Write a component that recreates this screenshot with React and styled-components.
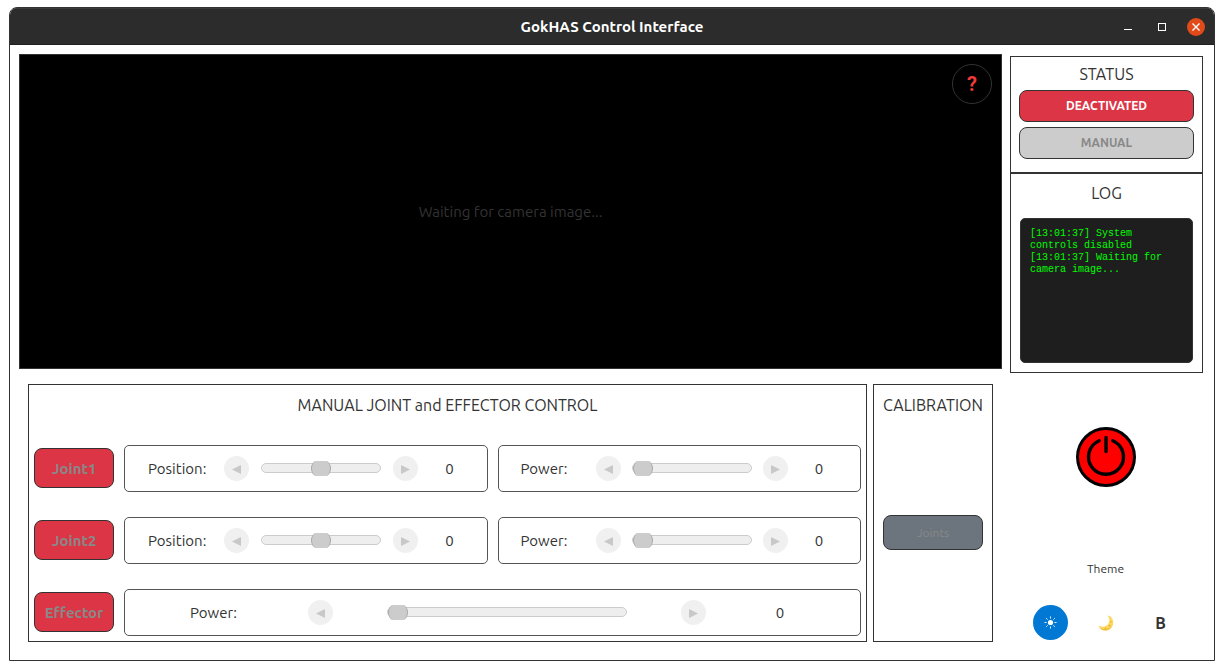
import React, { useState } from "react";
import styled, { createGlobalStyle, css } from "styled-components";

const ink = "#333333";
const danger = "#dc3545";

const GlobalStyle = createGlobalStyle`
  *, *::before, *::after { box-sizing: border-box; }
  body {
    margin: 0;
    background: #ffffff;
    color: ${ink};
    font-family: "Ubuntu", "Noto Sans", "Liberation Sans", sans-serif;
    font-size: 15px;
  }
  button, input { font-family: inherit; margin: 0; padding: 0; }
  h1, h2, p { margin: 0; }
  svg { display: block; }
`;

const Page = styled.div`
  min-height: 100vh;
  padding: 7px 9px 9px;
  display: flex;
`;

const Window = styled.div`
  flex: 1;
  min-width: 0;
  display: flex;
  flex-direction: column;
  border: 1px solid ${ink};
  border-radius: 8px 8px 0 0;
  overflow: hidden;
`;

const TitleBar = styled.header`
  display: grid;
  grid-template-columns: 1fr auto 1fr;
  align-items: center;
  height: 37px;
  padding: 0 9px;
  background: #2c2c2c;
  border-top: 1px solid #3a3a3a;
  border-bottom: 1px solid #1f1f1f;
`;

const WindowTitle = styled.h1`
  grid-column: 2;
  color: #ffffff;
  font-size: 15px;
  line-height: 20px;
  font-weight: 700;
`;

const WindowButtons = styled.div`
  display: flex;
  justify-content: flex-end;
  gap: 16px;
`;

const WindowButton = styled.button`
  width: 18px;
  height: 18px;
  border: 0;
  border-radius: 50%;
  background: ${(p) => (p.$close ? "#e14a19" : "transparent")};
`;

const Body = styled.main`
  flex: 1;
  display: grid;
  grid-template-columns: minmax(0, 1fr) 193px;
  gap: 8px;
  padding: 9px 11px 18px 9px;
`;

const Workspace = styled.div`
  display: flex;
  flex-direction: column;
  gap: 15px;
`;

const Camera = styled.section`
  position: relative;
  flex: 1;
  min-height: 315px;
  display: flex;
  align-items: center;
  justify-content: center;
  background: #000000;
  border: 1px solid ${ink};
  color: ${ink};
`;

const HelpButton = styled.button`
  position: absolute;
  top: 9px;
  right: 9px;
  width: 40px;
  height: 40px;
  border: 1px solid ${ink};
  border-radius: 50%;
  background: transparent;
  color: #f03a3a;
  font-family: Roboto, sans-serif;
  font-size: 20px;
  line-height: 38px;
  font-weight: 700;
`;

const Controls = styled.div`
  display: grid;
  grid-template-columns: minmax(0, 1fr) 120px;
  gap: 6px;
  padding: 0 9px;
`;

const Panel = styled.section`
  display: flex;
  flex-direction: column;
  border: 1px solid ${ink};
`;

const PanelTitle = styled.h2`
  font-size: 16px;
  font-weight: 400;
  line-height: 40px;
  text-align: center;
  white-space: nowrap;
`;

const Rows = styled.div`
  display: flex;
  flex-direction: column;
  gap: 25px;
  padding: 20px 5px 5px;
`;

const Row = styled.div`
  display: grid;
  grid-template-columns: 80px repeat(2, minmax(0, 1fr));
  align-items: start;
  gap: 10px;
`;

const outlined = css`
  border: 1px solid ${ink};
  border-radius: 8px;
`;

const JointButton = styled.button`
  ${outlined}
  height: 40px;
  margin-top: 3px;
  background: ${danger};
  color: #888888;
  font-size: 15px;
  font-weight: 700;
`;

const boxSpacing = {
  normal: { gap: "12px", padding: "0 17px 0 23px", span: 1 },
  tight: { gap: "11px", padding: "0 21px 0 22px", span: 1 },
  wide: { gap: "54px", padding: "0 60px 0 65px", span: 2 },
};

const ControlBox = styled.div`
  grid-column: span ${(p) => boxSpacing[p.$spacing].span};
  height: 47px;
  display: grid;
  grid-template-columns: 64px 25px minmax(0, 1fr) 25px 40px;
  align-items: center;
  column-gap: ${(p) => boxSpacing[p.$spacing].gap};
  padding: ${(p) => boxSpacing[p.$spacing].padding};
  border: 1px solid #555555;
  border-radius: 5px;
`;

const Caption = styled.label`
  font-size: 15px;
  line-height: 20px;
`;

const Value = styled.output`
  font-size: 15px;
  line-height: 20px;
  text-align: center;
`;

const StepButton = styled.button`
  display: grid;
  place-items: center;
  width: 25px;
  height: 25px;
  border: 0;
  border-radius: 50%;
  background: #f0f0f0;
  color: #c8c8c8;
`;

const Slider = styled.input.attrs({ type: "range" })`
  appearance: none;
  display: block;
  width: 100%;
  height: 17px;
  padding-bottom: 2px;
  background: transparent;

  &::-webkit-slider-runnable-track {
    height: 10px;
    background: #eeeeee;
    border: 1px solid #cccccc;
    border-radius: 5px;
  }

  &::-webkit-slider-thumb {
    appearance: none;
    width: 20px;
    height: 15px;
    margin: -3px 0 0;
    background: #cccccc;
    border: solid #aaaaaa;
    border-width: 0 1px;
    border-radius: 6px / 8px;
  }
`;

const CalibrationBody = styled.div`
  flex: 1;
  display: grid;
  place-items: center;
  padding-bottom: 2px;
`;

const CalibrateButton = styled.button`
  ${outlined}
  width: 100px;
  height: 35px;
  background: #6c757d;
  color: #888888;
  font-size: 12px;
`;

const Sidebar = styled.aside`
  display: flex;
  flex-direction: column;
  padding-top: 2px;
`;

const StatusPanel = styled(Panel)`
  gap: 5px;
  padding: 0 8px 13px;

  ${PanelTitle} {
    line-height: 28px;
    padding-top: 3px;
    margin-bottom: -3px;
  }
`;

const StatusButton = styled.button`
  ${outlined}
  height: 32px;
  padding-bottom: 2px;
  background: ${(p) => (p.$active ? danger : "#cccccc")};
  color: ${(p) => (p.$active ? "#ffffff" : "#888888")};
  font-size: 12px;
  font-weight: 700;
`;

const LogPanel = styled(Panel)`
  gap: 6px;
  padding: 0 9px 9px;

  ${PanelTitle} {
    line-height: 38px;
  }
`;

const LogView = styled.div`
  height: 145px;
  padding: 9px;
  background: #1e1e1e;
  border: 1px solid ${ink};
  border-radius: 5px;
  color: #00ff00;
  font-family: "Liberation Mono", monospace;
  font-size: 10px;
  line-height: 12px;
`;

const PowerArea = styled.div`
  flex: 1;
  display: grid;
  place-items: center;
  padding-right: 1px;
`;

const PowerButton = styled.button`
  width: 60px;
  height: 60px;
  border: 0;
  border-radius: 50%;
  background: transparent;
`;

const ThemeSection = styled.section`
  display: flex;
  flex-direction: column;
  align-items: center;
  gap: 26px;
  padding: 18px 2px 2px 0;
`;

const ThemeLabel = styled.p`
  font-size: 12px;
  line-height: 20px;
`;

const ThemeButtons = styled.div`
  display: flex;
  gap: 20px;
`;

const ThemeButton = styled.button`
  display: grid;
  place-items: center;
  width: 35px;
  height: 35px;
  border: 0;
  border-radius: 50%;
  background: ${(p) => (p.$selected ? "#0078d4" : "transparent")};
  color: ${(p) => (p.$selected ? "#ffffff" : ink)};
  font-size: 16px;
  font-weight: 700;
`;

const Arrow = ({ right }) => (
  <svg width="11" height="11" viewBox="0 0 11 11" aria-hidden="true">
    <path d={right ? "M1 2v9l9-4.500z" : "M10 2v9L1 6.500z"} fill="currentColor" />
  </svg>
);

const PowerIcon = () => (
  <svg width="60" height="60" viewBox="0 0 60 60" fill="none" aria-hidden="true">
    <circle cx="30" cy="30" r="28.500" fill="#ff0000" stroke="#000" strokeWidth="3" />
    <path
      d="M23.200 13.700A17.500 17.500 0 1 0 36.800 13.700M30 10.500V24.500"
      stroke="#000"
      strokeWidth="3.400"
      strokeLinecap="round"
    />
  </svg>
);

const SunIcon = () => (
  <svg width="13" height="13" viewBox="0 0 13 13" aria-hidden="true">
    <circle cx="6.500" cy="6.500" r="2.600" fill="currentColor" />
    <path
      d="M6.500 .5v2M6.500 10.500v2M.5 6.500h2M10.500 6.500h2M2.200 2.200l1.400 1.400M9.400 9.400l1.400 1.400M2.200 10.800l1.400-1.400M9.400 3.600l1.400-1.400"
      stroke="currentColor"
      strokeWidth=".9"
    />
  </svg>
);

const MoonIcon = () => (
  <svg width="16" height="16" viewBox="0 0 16 16" aria-hidden="true">
    <path
      d="M10.600 .6C14 2 15.600 5 15.200 8.600C14.700 12.700 11.500 15.500 7.500 15.500C4.800 15.500 2.100 14 .9 11.700C.7 11.200 1.100 10.900 1.600 11.100C4.600 12.400 8.300 11.600 10.200 8.900C11.900 6.500 11.700 3.500 10.100 1.200C9.900 .8 10.200 .4 10.600 .6Z"
      fill="#fdd85d"
    />
    <path d="M1.300 12.200C5 15 11 14.500 13.800 11.600C12.200 14.200 10 15.500 7.500 15.500C5 15.500 2.700 14.300 1.300 12.200Z" fill="#f2bd3d" />
    <circle cx="12.900" cy="6.700" r=".8" fill="#e9ac36" />
    <circle cx="11.700" cy="10.700" r=".9" fill="#e9ac36" />
    <circle cx="7.400" cy="13.300" r=".8" fill="#e9ac36" />
  </svg>
);

function AxisControl({ id, name, label, min = 0, spacing = "normal" }) {
  const [value, setValue] = useState(0);
  return (
    <ControlBox $spacing={spacing}>
      <Caption htmlFor={id}>{label}:</Caption>
      <StepButton disabled aria-label={`Decrease ${name} ${label}`}>
        <Arrow />
      </StepButton>
      <Slider
        id={id}
        min={min}
        max={100}
        value={value}
        disabled
        onChange={(e) => setValue(Number(e.target.value))}
      />
      <StepButton disabled aria-label={`Increase ${name} ${label}`}>
        <Arrow right />
      </StepButton>
      <Value htmlFor={id}>{value}</Value>
    </ControlBox>
  );
}

const logLines = ["[13:01:37] System controls disabled", "[13:01:37] Waiting for camera image..."];

export default function App() {
  const [theme, setTheme] = useState("light");
  return (
    <>
      <GlobalStyle />
      <Page>
        <Window>
          <TitleBar>
            <WindowTitle>GokHAS Control Interface</WindowTitle>
            <WindowButtons>
              <WindowButton aria-label="Minimize">
                <svg width="18" height="18" viewBox="0 0 18 18">
                  <path d="M5 11.500h8" stroke="#fff" />
                </svg>
              </WindowButton>
              <WindowButton aria-label="Maximize">
                <svg width="18" height="18" viewBox="0 0 18 18">
                  <rect x="5.500" y="5.500" width="7" height="7" fill="none" stroke="#fff" />
                </svg>
              </WindowButton>
              <WindowButton $close aria-label="Close">
                <svg width="18" height="18" viewBox="0 0 18 18">
                  <path d="M5.500 5.500l7 7M12.500 5.500l-7 7" stroke="#fff" strokeWidth="1.400" />
                </svg>
              </WindowButton>
            </WindowButtons>
          </TitleBar>

          <Body>
            <Workspace>
              <Camera>
                <p>Waiting for camera image...</p>
                <HelpButton aria-label="Help">?</HelpButton>
              </Camera>

              <Controls>
                <Panel>
                  <PanelTitle>MANUAL JOINT and EFFECTOR CONTROL</PanelTitle>
                  <Rows>
                    {["Joint1", "Joint2"].map((joint) => (
                      <Row key={joint}>
                        <JointButton disabled>{joint}</JointButton>
                        <AxisControl id={`${joint}-position`} name={joint} label="Position" min={-100} />
                        <AxisControl id={`${joint}-power`} name={joint} label="Power" spacing="tight" />
                      </Row>
                    ))}
                    <Row>
                      <JointButton disabled>Effector</JointButton>
                      <AxisControl id="effector-power" name="Effector" label="Power" spacing="wide" />
                    </Row>
                  </Rows>
                </Panel>

                <Panel>
                  <PanelTitle>CALIBRATION</PanelTitle>
                  <CalibrationBody>
                    <CalibrateButton disabled>Joints</CalibrateButton>
                  </CalibrationBody>
                </Panel>
              </Controls>
            </Workspace>

            <Sidebar>
              <StatusPanel>
                <PanelTitle>STATUS</PanelTitle>
                <StatusButton $active>DEACTIVATED</StatusButton>
                <StatusButton disabled>MANUAL</StatusButton>
              </StatusPanel>
              <LogPanel>
                <PanelTitle>LOG</PanelTitle>
                <LogView role="log">
                  {logLines.map((line) => (
                    <p key={line}>{line}</p>
                  ))}
                </LogView>
              </LogPanel>
              <PowerArea>
                <PowerButton aria-label="Power">
                  <PowerIcon />
                </PowerButton>
              </PowerArea>
              <ThemeSection>
                <ThemeLabel>Theme</ThemeLabel>
                <ThemeButtons>
                  <ThemeButton $selected={theme === "light"} onClick={() => setTheme("light")} aria-label="Light theme">
                    <SunIcon />
                  </ThemeButton>
                  <ThemeButton $selected={theme === "dark"} onClick={() => setTheme("dark")} aria-label="Dark theme">
                    <MoonIcon />
                  </ThemeButton>
                  <ThemeButton $selected={theme === "bold"} onClick={() => setTheme("bold")}>
                    B
                  </ThemeButton>
                </ThemeButtons>
              </ThemeSection>
            </Sidebar>
          </Body>
        </Window>
      </Page>
    </>
  );
}
